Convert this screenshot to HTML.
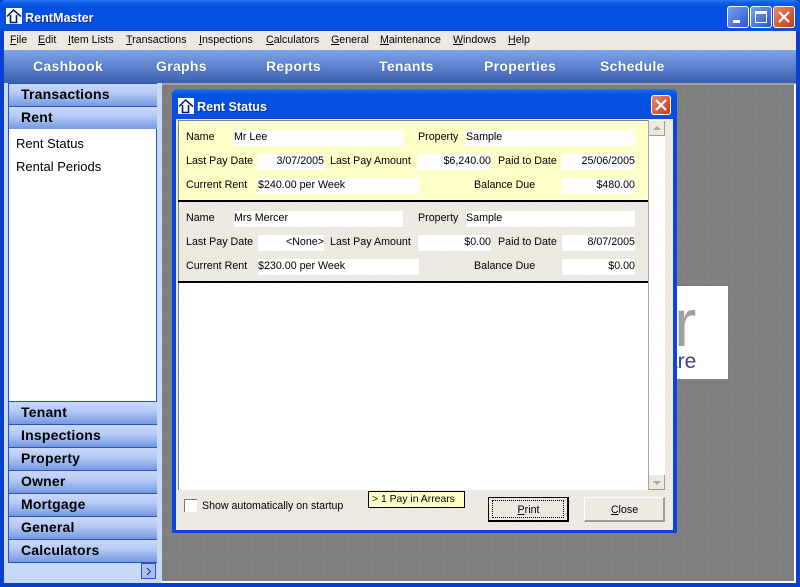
<!DOCTYPE html>
<html><head><meta charset="utf-8"><title>RentMaster</title>
<style>
html,body{margin:0;padding:0}
body{width:800px;height:587px;overflow:hidden;position:relative;background:#0a3fd0;font-family:"Liberation Sans",sans-serif;font-size:12px;color:#000}
div,svg{position:absolute}
.t{white-space:nowrap;line-height:14px;height:14px;font-size:10.7px;margin-top:1px}
.r{text-align:right}
.w{background:#fff}
u{text-decoration:underline}
.dith{background-color:#ebe7e0;background-image:linear-gradient(45deg,#f3f0ea 25%,transparent 25%,transparent 75%,#f3f0ea 75%);background-size:3px 3px}
.gray{background-color:#808080;background-image:radial-gradient(#6f6f6f 0.6px,transparent 0.8px);background-size:6px 6px}
.side{left:8px;width:148px;height:22px;background:linear-gradient(#c9d8fb 0%,#b7cbf6 40%,#7499e0 100%);border-bottom:1px solid #2a52b8;border-left:1px solid #2a52b8;font-weight:bold;font-size:14px;letter-spacing:.2px;line-height:21px;text-indent:12px;color:#000}
.tb{top:57px;color:#fff;font-weight:bold;font-size:14px;letter-spacing:.3px;line-height:18px;white-space:nowrap;text-shadow:0 0 1px #2b4a90}
.m{top:33px;white-space:nowrap;font-size:10.65px;line-height:15px}
.btn{width:22px;height:22px;border:1px solid #fff;border-radius:3px;box-sizing:border-box}
</style></head><body>

<div style="left:0;top:0;width:800px;height:31px;background:linear-gradient(#2a78f0 0,#0c5ee8 3px,#0450e0 7px,#0550e2 22px,#0a4fd8 31px);border-radius:6px 6px 0 0"></div>
<svg style="left:6px;top:8px" width="16" height="16" viewBox="0 0 16 16"><rect width="16" height="16" fill="#fff"/><path d="M1 8.5 7.5 2 15 8.5" fill="none" stroke="#001a70" stroke-width="1.5"/><path d="M4.5 7V14.5H10.5V7" fill="none" stroke="#001a70" stroke-width="1.6"/></svg>
<div class="t" style="left:25px;top:9px;color:#fff;font-weight:bold;font-size:12.6px;line-height:16px;height:16px;text-shadow:1px 1px 0 #0a2fa0">RentMaster</div>

<div class="btn" style="left:727px;top:6px;background:linear-gradient(135deg,#7aa0f0,#2a55d0)"><div style="left:5px;top:13px;width:7px;height:3px;background:#fff"></div></div>
<div class="btn" style="left:750px;top:6px;background:linear-gradient(135deg,#7aa0f0,#2a55d0)"><div style="left:4px;top:4px;border:1px solid #fff;border-top:3px solid #fff;box-sizing:border-box;width:12px;height:12px"></div></div>
<div class="btn" style="left:773px;top:6px;background:linear-gradient(135deg,#e88a6a,#c83a14)"><svg style="left:4px;top:4px" width="12" height="12"><path d="M1 1 11 11M11 1 1 11" stroke="#fff" stroke-width="2.2"/></svg></div>

<div class="dith" style="left:4px;top:31px;width:792px;height:19px"></div>
<div class="m" style="left:10px"><u>F</u>ile</div>
<div class="m" style="left:38px"><u>E</u>dit</div>
<div class="m" style="left:68px"><u>I</u>tem Lists</div>
<div class="m" style="left:126px"><u>T</u>ransactions</div>
<div class="m" style="left:199px"><u>I</u>nspections</div>
<div class="m" style="left:266px"><u>C</u>alculators</div>
<div class="m" style="left:331px"><u>G</u>eneral</div>
<div class="m" style="left:380px"><u>M</u>aintenance</div>
<div class="m" style="left:453px"><u>W</u>indows</div>
<div class="m" style="left:508px"><u>H</u>elp</div>

<div style="left:4px;top:50px;width:792px;height:33px;background:linear-gradient(#7fa5ea,#3c5fb0)"></div>
<div class="tb" style="left:33px">Cashbook</div>
<div class="tb" style="left:156px">Graphs</div>
<div class="tb" style="left:266px">Reports</div>
<div class="tb" style="left:379px">Tenants</div>
<div class="tb" style="left:484px">Properties</div>
<div class="tb" style="left:600px">Schedule</div>

<div style="left:4px;top:83px;width:158px;height:500px;background:#c8d8f8"></div>
<div style="left:8px;top:83px;width:149px;height:1px;background:#2a52b8"></div>
<div class="side" style="top:84px">Transactions</div>
<div class="side" style="top:107px">Rent</div>
<div class="w" style="left:8px;top:129px;width:149px;height:273px;border-left:1px solid #2a52b8;border-right:1px solid #2a52b8;box-sizing:border-box"></div>
<div class="t" style="left:16px;top:136px;font-size:13px">Rent Status</div>
<div class="t" style="left:16px;top:159px;font-size:13px">Rental Periods</div>
<div style="left:8px;top:401px;width:149px;height:1px;background:#2a52b8"></div>
<div class="side" style="top:402px">Tenant</div>
<div class="side" style="top:425px">Inspections</div>
<div class="side" style="top:448px">Property</div>
<div class="side" style="top:471px">Owner</div>
<div class="side" style="top:494px">Mortgage</div>
<div class="side" style="top:517px">General</div>
<div class="side" style="top:540px">Calculators</div>
<div style="left:141px;top:563px;width:15px;height:16px;background:#a9c0f0;border:1px solid #2a52b8;box-sizing:border-box"></div>
<svg style="left:141px;top:563px" width="15" height="16"><path d="M6 5 9.5 8.5 6 12" fill="none" stroke="#1a2f70"/></svg>

<div class="gray" style="left:162px;top:83px;width:634px;height:500px;border-top:2px solid #a0a0a0;box-sizing:border-box"></div>
<div style="left:794px;top:84px;width:2px;height:499px;background:#fff"></div>
<div style="left:162px;top:581px;width:634px;height:2px;background:#fff"></div>

<div class="w" style="left:677px;top:286px;width:51px;height:93px;overflow:hidden">
<div style="left:-3px;top:4px;font-size:67px;line-height:67px;color:#a0a09c;white-space:nowrap">r</div>
<div style="left:-11px;top:64px;font-size:21px;line-height:24px;color:#3c4488;white-space:nowrap">are</div>
</div>

<div style="left:172px;top:89px;width:505px;height:444px;background:#0a46d8;border-radius:6px 6px 0 0"></div>
<div style="left:172px;top:89px;width:505px;height:30px;background:linear-gradient(#2a78f0 0,#0c5ee8 3px,#0450e0 7px,#0550e2 22px,#0a4fd8 30px);border-radius:6px 6px 0 0"></div>
<svg style="left:178px;top:98px" width="16" height="16" viewBox="0 0 16 16"><rect width="16" height="16" fill="#fff"/><path d="M1 8.5 7.5 2 15 8.5" fill="none" stroke="#001a70" stroke-width="1.5"/><path d="M4.5 7V14.5H10.5V7" fill="none" stroke="#001a70" stroke-width="1.6"/></svg>
<div class="t" style="left:197px;top:98px;color:#fff;font-weight:bold;font-size:12.6px;line-height:16px;height:16px;text-shadow:1px 1px 0 #0a2fa0">Rent Status</div>
<div class="btn" style="left:651px;top:95px;width:20px;height:20px;background:linear-gradient(135deg,#e88a6a,#c83a14)"><svg style="left:3px;top:3px" width="12" height="12"><path d="M1 1 11 11M11 1 1 11" stroke="#fff" stroke-width="2.2"/></svg></div>

<div class="dith" style="left:176px;top:119px;width:497px;height:411px"></div>
<div class="w" style="left:178px;top:120px;width:470px;height:370px;border-top:1px solid #808080;border-left:1px solid #808080;box-sizing:border-box"></div>
<div style="left:179px;top:121px;width:469px;height:79px;background:#ffffc8"></div>
<div style="left:178px;top:200px;width:470px;height:2px;background:#000"></div>
<div class="dith" style="left:179px;top:202px;width:469px;height:79px"></div>
<div style="left:178px;top:281px;width:470px;height:2px;background:#000"></div>

<div class="t" style="left:186px;top:129px">Name</div>
<div class="w" style="left:234px;top:130px;width:169px;height:16px"></div><div class="t" style="left:234px;top:129px">Mr Lee</div>
<div class="t" style="left:418px;top:129px">Property</div>
<div class="w" style="left:466px;top:130px;width:169px;height:16px"></div><div class="t" style="left:466px;top:129px">Sample</div>
<div class="t" style="left:186px;top:153px">Last Pay Date</div>
<div class="w" style="left:258px;top:154px;width:66px;height:16px"></div><div class="t r" style="left:258px;top:153px;width:66px">3/07/2005</div>
<div class="t" style="left:330px;top:153px">Last Pay Amount</div>
<div class="w" style="left:418px;top:154px;width:73px;height:16px"></div><div class="t r" style="left:418px;top:153px;width:73px">$6,240.00</div>
<div class="t" style="left:498px;top:153px">Paid to Date</div>
<div class="w" style="left:562px;top:154px;width:73px;height:16px"></div><div class="t r" style="left:562px;top:153px;width:73px">25/06/2005</div>
<div class="t" style="left:186px;top:177px">Current Rent</div>
<div class="w" style="left:258px;top:178px;width:161px;height:16px"></div><div class="t" style="left:258px;top:177px">$240.00 per Week</div>
<div class="t" style="left:474px;top:177px">Balance Due</div>
<div class="w" style="left:562px;top:178px;width:73px;height:16px"></div><div class="t r" style="left:562px;top:177px;width:73px">$480.00</div>

<div class="t" style="left:186px;top:210px">Name</div>
<div class="w" style="left:234px;top:211px;width:169px;height:16px"></div><div class="t" style="left:234px;top:210px">Mrs Mercer</div>
<div class="t" style="left:418px;top:210px">Property</div>
<div class="w" style="left:466px;top:211px;width:169px;height:16px"></div><div class="t" style="left:466px;top:210px">Sample</div>
<div class="t" style="left:186px;top:234px">Last Pay Date</div>
<div class="w" style="left:258px;top:235px;width:66px;height:16px"></div><div class="t r" style="left:258px;top:234px;width:66px">&lt;None&gt;</div>
<div class="t" style="left:330px;top:234px">Last Pay Amount</div>
<div class="w" style="left:418px;top:235px;width:73px;height:16px"></div><div class="t r" style="left:418px;top:234px;width:73px">$0.00</div>
<div class="t" style="left:498px;top:234px">Paid to Date</div>
<div class="w" style="left:562px;top:235px;width:73px;height:16px"></div><div class="t r" style="left:562px;top:234px;width:73px">8/07/2005</div>
<div class="t" style="left:186px;top:258px">Current Rent</div>
<div class="w" style="left:258px;top:259px;width:161px;height:16px"></div><div class="t" style="left:258px;top:258px">$230.00 per Week</div>
<div class="t" style="left:474px;top:258px">Balance Due</div>
<div class="w" style="left:562px;top:259px;width:73px;height:16px"></div><div class="t r" style="left:562px;top:258px;width:73px">$0.00</div>

<div class="w" style="left:648px;top:120px;width:17px;height:370px;border-left:1px solid #a8a898;box-sizing:border-box"></div>
<div class="dith" style="left:649px;top:121px;width:16px;height:15px;border-right:1px solid #a09c90;border-bottom:1px solid #a09c90;box-sizing:border-box"></div>
<svg style="left:649px;top:121px" width="16" height="15"><path d="M4 9 8 5 12 9Z" fill="#a8a89c"/></svg>
<div class="dith" style="left:649px;top:475px;width:16px;height:15px;border-right:1px solid #a09c90;border-bottom:1px solid #a09c90;box-sizing:border-box"></div>
<svg style="left:649px;top:475px" width="16" height="15"><path d="M4 6 8 10 12 6Z" fill="#a8a89c"/></svg>

<div style="left:184px;top:499px;width:13px;height:13px;background:#fff;border-top:1px solid #777;border-left:1px solid #777;box-sizing:border-box"></div>
<div class="t" style="left:202px;top:498px;font-size:10.6px">Show automatically on startup</div>
<div style="left:368px;top:491px;width:97px;height:17px;background:#ffffc8;border:1px solid #000;box-sizing:border-box"></div>
<div class="t" style="left:372px;top:492px;font-size:10.4px">&gt; 1 Pay in Arrears</div>

<div class="dith" style="left:488px;top:497px;width:81px;height:25px;border:1px solid #000;border-right:2px solid #000;border-bottom:2px solid #000;box-sizing:border-box"></div>
<div style="left:492px;top:500px;width:72px;height:18px;border:1px dotted #000;box-sizing:border-box"></div>
<div class="t" style="left:488px;top:502px;width:81px;text-align:center"><u>P</u>rint</div>
<div class="dith" style="left:584px;top:497px;width:81px;height:25px;border-right:2px solid #a09c90;border-bottom:2px solid #a09c90;border-top:1px solid #fff;border-left:1px solid #fff;box-sizing:border-box"></div>
<div class="t" style="left:584px;top:502px;width:81px;text-align:center"><u>C</u>lose</div>

</body></html>
